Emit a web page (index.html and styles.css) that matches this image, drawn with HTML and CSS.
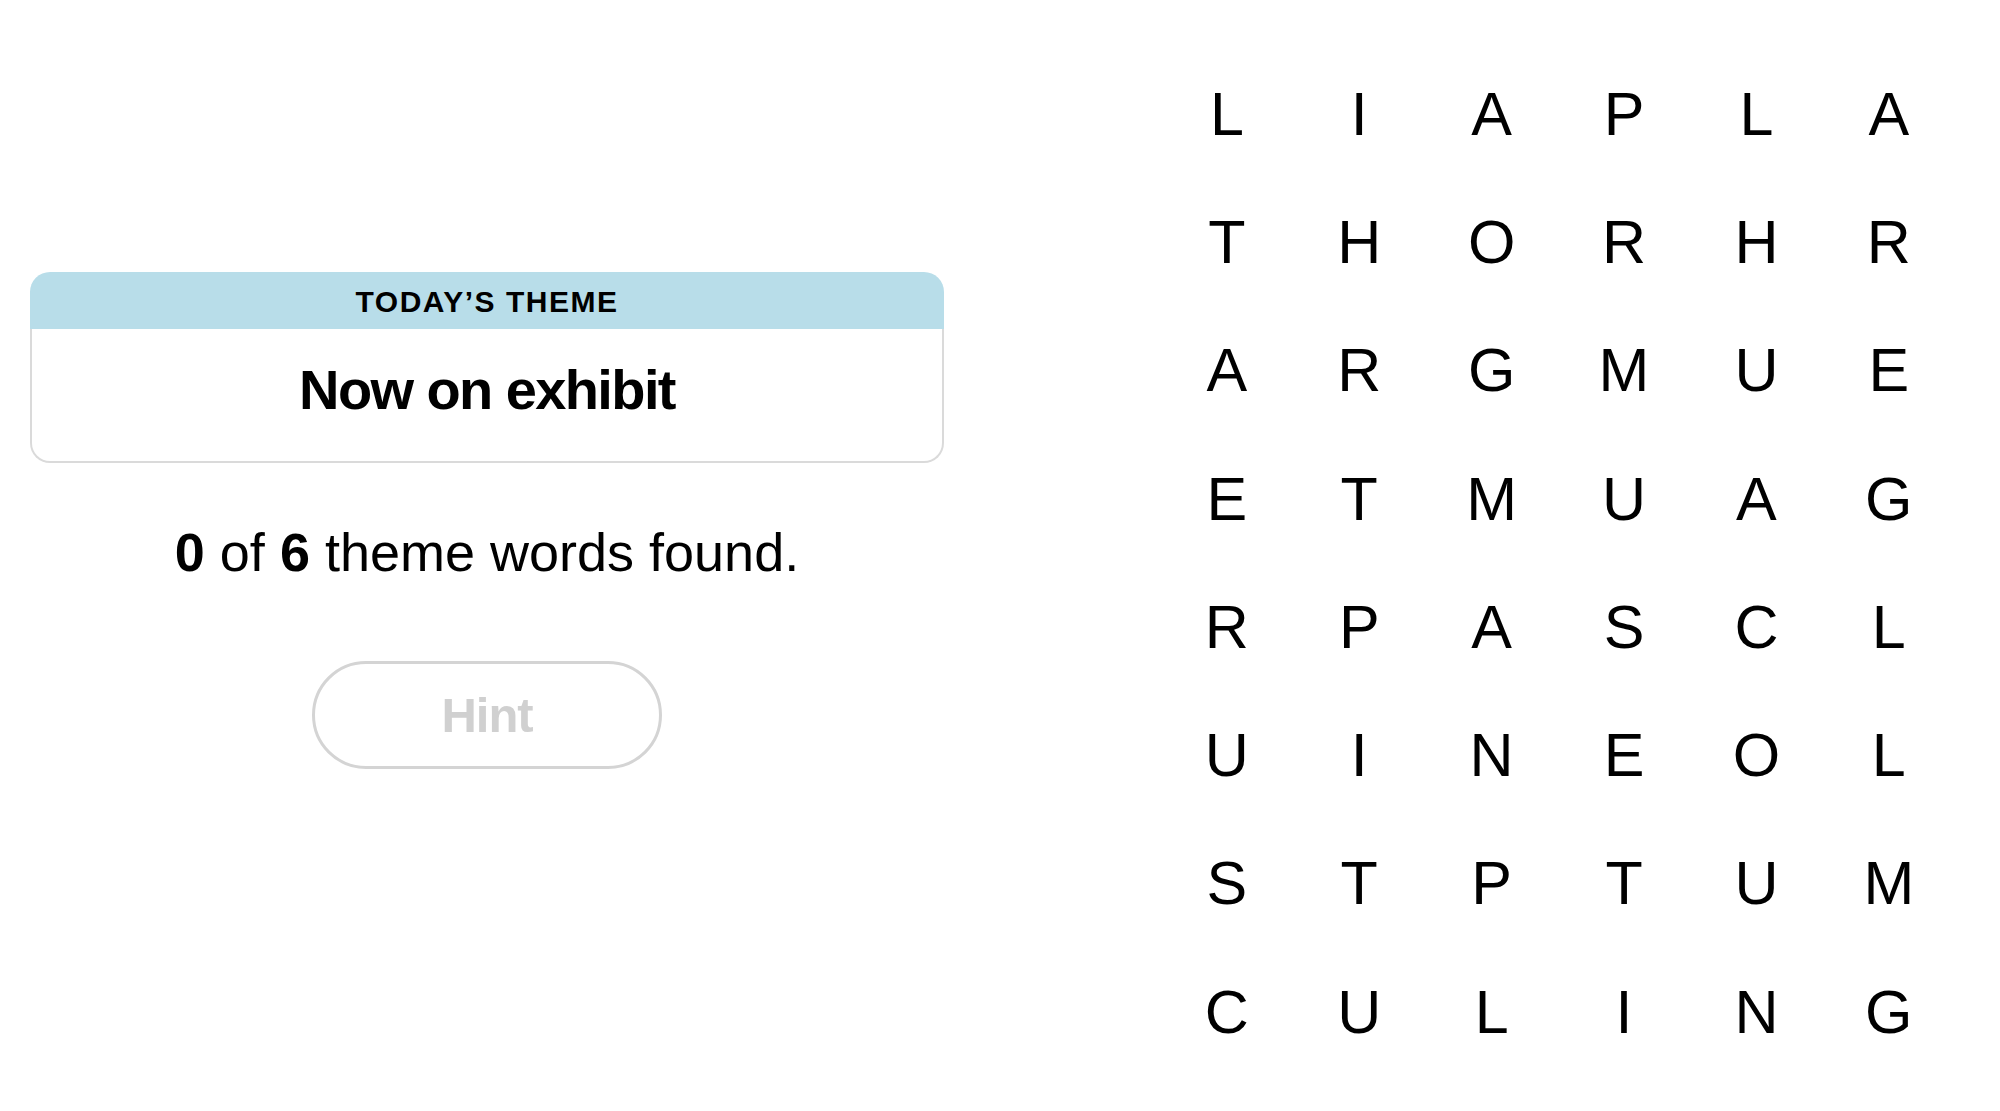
FILE: index.html
```html
<!DOCTYPE html>
<html lang="en">
<head>
<meta charset="utf-8">
<title>Strands</title>
<link rel="stylesheet" href="styles.css">
</head>
<body>
<main class="page">
  <section class="side">
    <div class="card">
      <div class="card-head">TODAY’S THEME</div>
      <div class="card-body">Now on exhibit</div>
    </div>
    <p class="progress"><b>0</b> of <b>6</b> theme words found.</p>
    <button class="hint" type="button" disabled>Hint</button>
  </section>
  <section class="board">
    <div class="grid">
      <span>L</span><span>I</span><span>A</span><span>P</span><span>L</span><span>A</span>
      <span>T</span><span>H</span><span>O</span><span>R</span><span>H</span><span>R</span>
      <span>A</span><span>R</span><span>G</span><span>M</span><span>U</span><span>E</span>
      <span>E</span><span>T</span><span>M</span><span>U</span><span>A</span><span>G</span>
      <span>R</span><span>P</span><span>A</span><span>S</span><span>C</span><span>L</span>
      <span>U</span><span>I</span><span>N</span><span>E</span><span>O</span><span>L</span>
      <span>S</span><span>T</span><span>P</span><span>T</span><span>U</span><span>M</span>
      <span>C</span><span>U</span><span>L</span><span>I</span><span>N</span><span>G</span>
    </div>
  </section>
</main>
</body>
</html>
```

FILE: styles.css
```css
* { box-sizing: border-box; }
html, body { margin: 0; padding: 0; background: #ffffff; }
body {
  width: 2000px;
  height: 1111px;
  overflow: hidden;
  font-family: "Liberation Sans", Arial, sans-serif;
  color: #000;
}
.page {
  display: flex;
  height: 100%;
}
.side {
  width: 974px;
  padding: 272px 30px 0 30px;
  display: flex;
  flex-direction: column;
  align-items: center;
}
.card {
  width: 914px;
  display: flex;
  flex-direction: column;
}
.card-head {
  height: 57px;
  background: #b8dde9;
  border-radius: 20px 20px 0 0;
  display: flex;
  align-items: center;
  justify-content: center;
  font-weight: 700;
  font-size: 30px;
  letter-spacing: 1.5px;
  padding-top: 2px;
}
.card-body {
  height: 134px;
  border: 2px solid #dadada;
  border-top: 0;
  border-radius: 0 0 20px 20px;
  text-align: center;
  font-weight: 700;
  font-size: 56px;
  line-height: 56px;
  letter-spacing: -1.6px;
  padding-top: 33px;
}
.progress {
  margin: 62px 0 0;
  font-size: 54px;
  line-height: 54px;
  text-align: center;
}
.progress b { font-weight: 700; }
.hint {
  margin-top: 82px;
  width: 350px;
  height: 108px;
  border: 3px solid #d4d4d4;
  border-radius: 54px;
  background: #fff;
  font-family: "Liberation Sans", Arial, sans-serif;
  font-weight: 700;
  font-size: 49px;
  letter-spacing: -1px;
  color: #d0d0d0;
  padding: 0;
}
.board {
  flex: 1;
  display: flex;
  justify-content: flex-end;
  padding: 50px 45px 0 0;
}
.grid {
  display: grid;
  grid-template-columns: repeat(6, 132.4px);
  grid-template-rows: repeat(8, 128.3px);
}
.grid span {
  display: flex;
  align-items: center;
  justify-content: center;
  font-size: 61px;
  line-height: 1;
}
```
